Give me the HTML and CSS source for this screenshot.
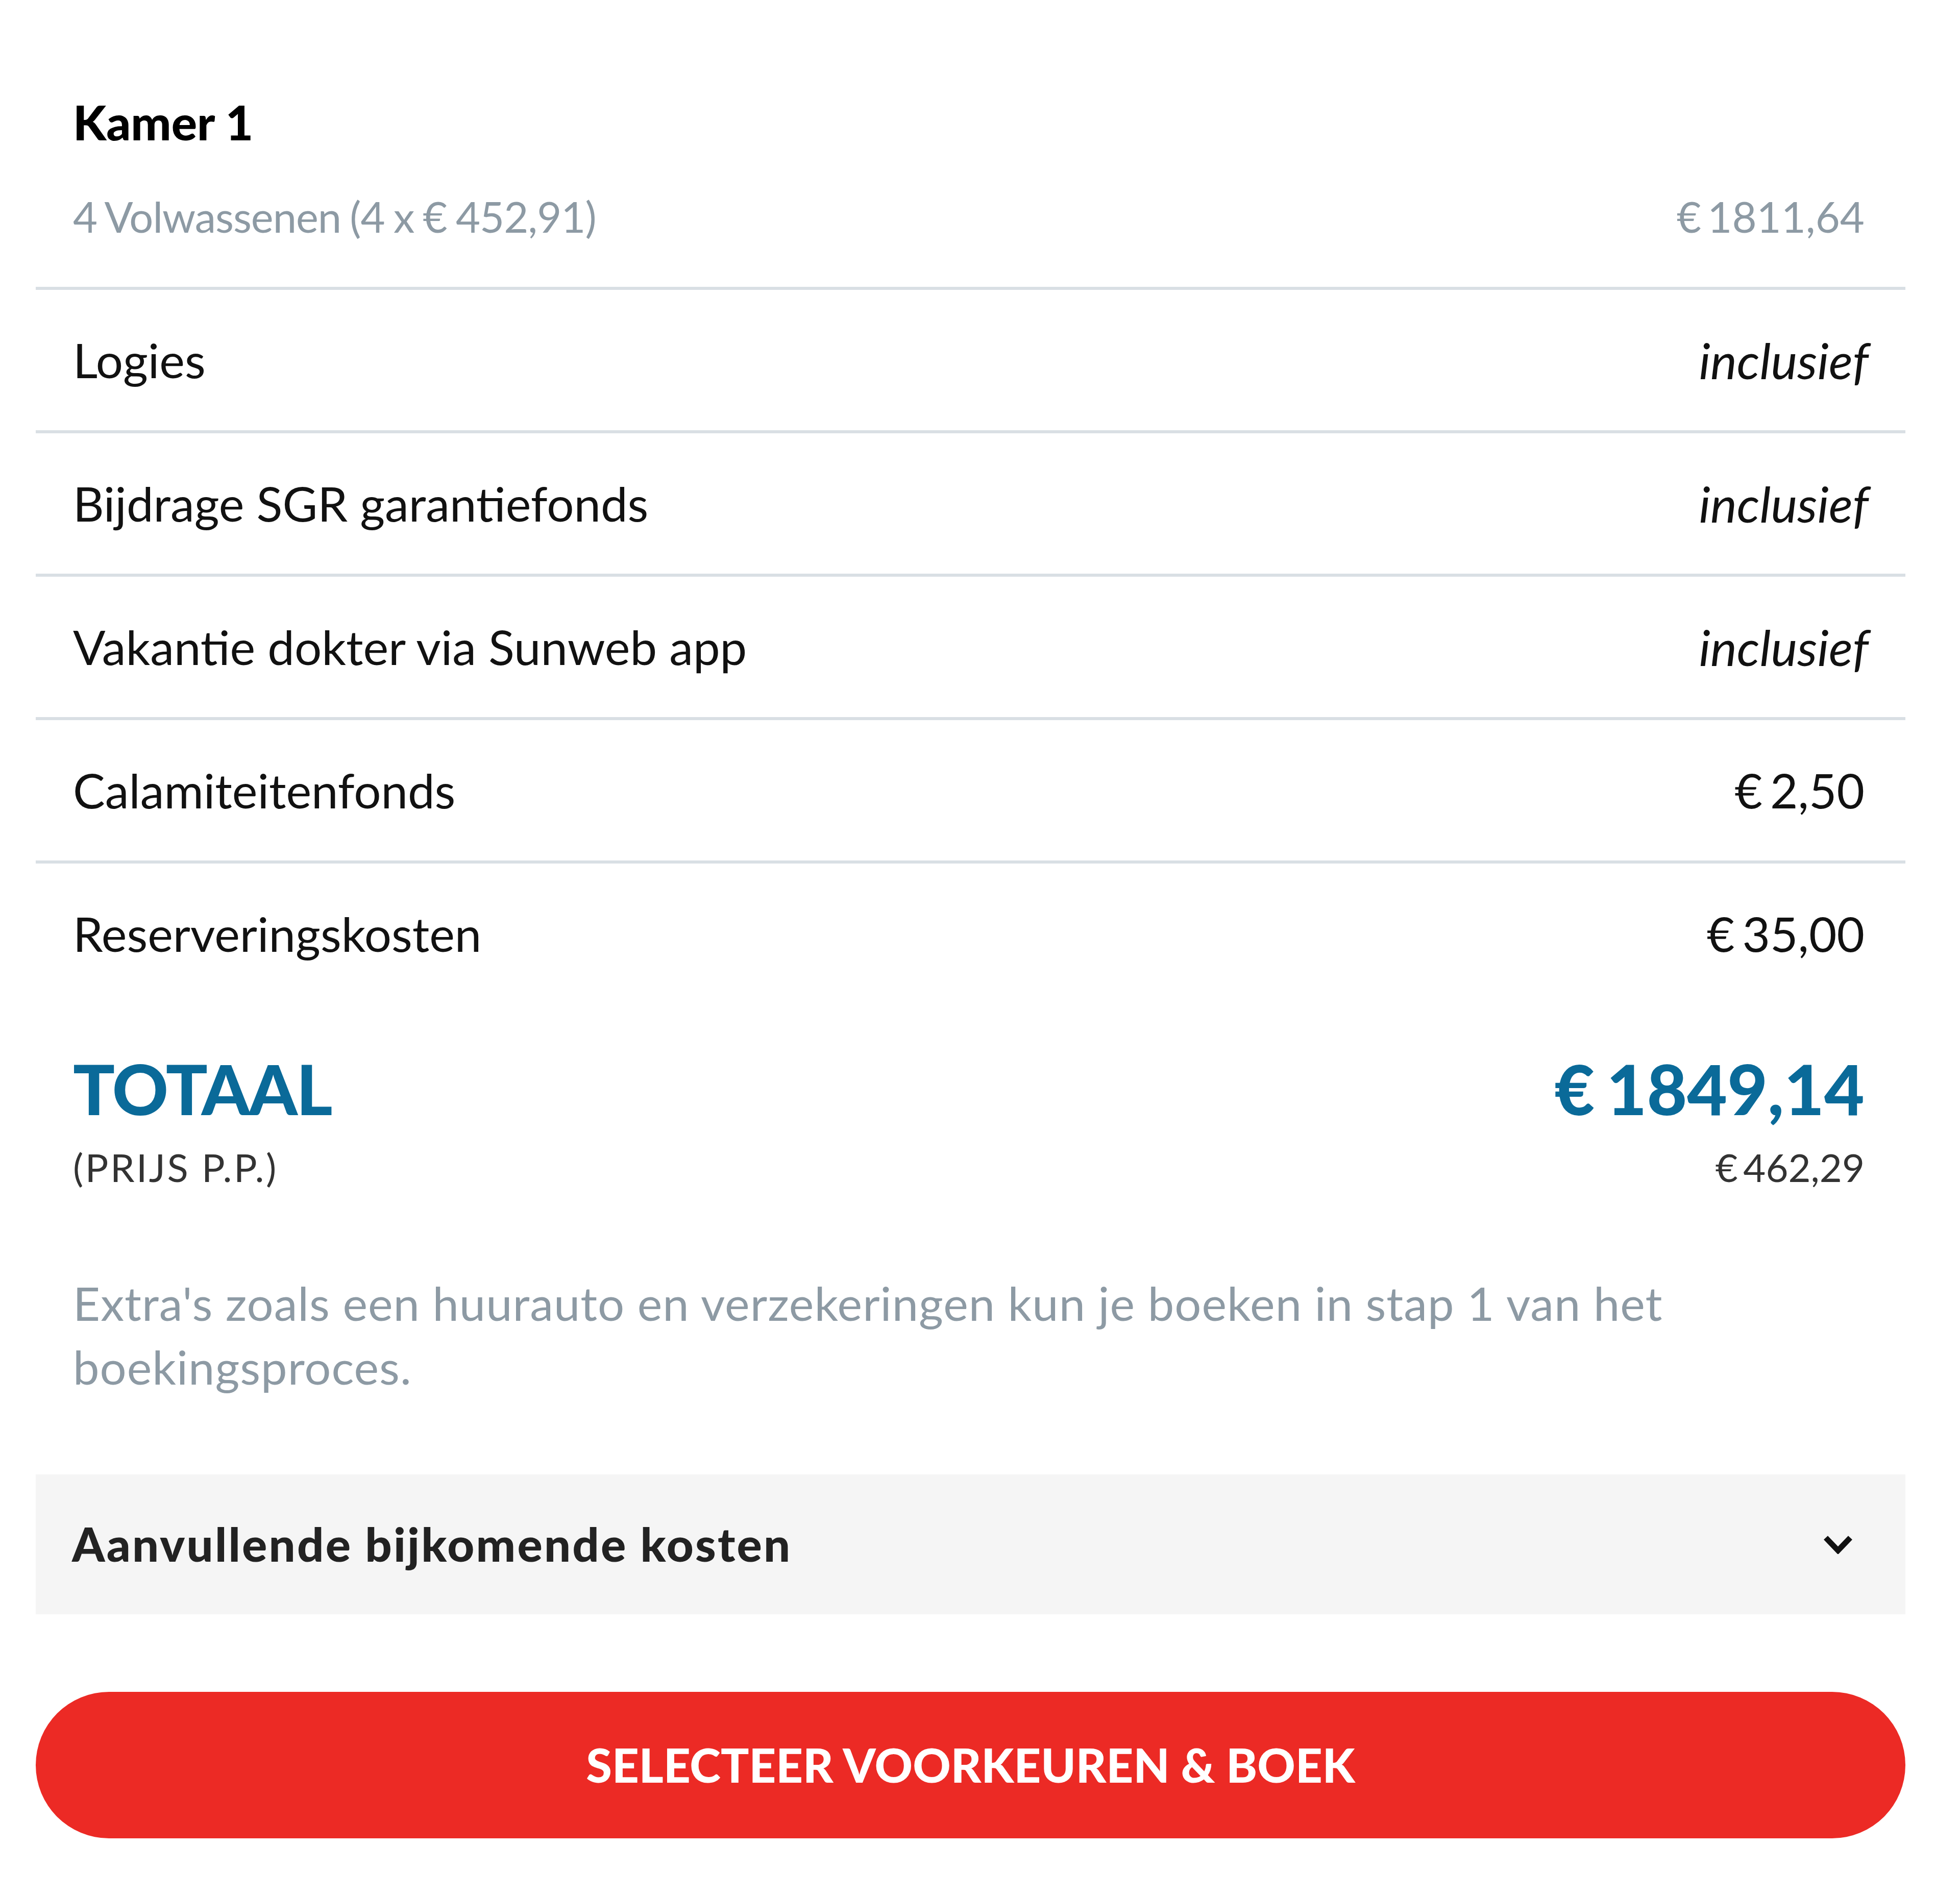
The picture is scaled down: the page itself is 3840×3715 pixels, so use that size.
FILE: index.html
```html
<!DOCTYPE html>
<html lang="nl">
<head>
<meta charset="utf-8">
<title>Prijsoverzicht</title>
<link rel="stylesheet" href="styles.css">
</head>
<body>
<main class="card">
  <section class="room">
    <h2 class="room-title">Kamer 1</h2>
    <div class="room-line">
      <span class="tight">4 Volwassenen (4 x € 452,91)</span>
      <span class="amount">€ 1811,64</span>
    </div>
  </section>

  <ul class="rows">
    <li class="row"><span>Logies</span><em class="incl">inclusief</em></li>
    <li class="row"><span>Bijdrage SGR garantiefonds</span><em class="incl">inclusief</em></li>
    <li class="row"><span>Vakantie dokter via Sunweb app</span><em class="incl">inclusief</em></li>
    <li class="row"><span>Calamiteitenfonds</span><span class="amount">€ 2,50</span></li>
    <li class="row"><span>Reserveringskosten</span><span class="amount">€ 35,00</span></li>
  </ul>

  <section class="total">
    <div class="total-col">
      <div class="total-big total-label">TOTAAL</div>
      <div class="total-small pp">(PRIJS P.P.)</div>
    </div>
    <div class="total-col total-right">
      <div class="total-big amount">€ 1849,14</div>
      <div class="total-small amount">€ 462,29</div>
    </div>
  </section>

  <p class="note">Extra's zoals een huurauto en verzekeringen kun je boeken in stap 1 van het boekingsproces.</p>

  <div class="extra-costs">
    <span class="extra-title">Aanvullende bijkomende kosten</span>
    <svg class="chevron" width="58" height="38" viewBox="0 0 58 38" aria-hidden="true">
      <polyline points="5,6 29,31 53,6" fill="none" stroke="#111" stroke-width="11" stroke-linejoin="miter"/>
    </svg>
  </div>

  <button class="cta">SELECTEER VOORKEUREN &amp; BOEK</button>
</main>
</body>
</html>
```

FILE: styles.css
```css
html, body {
  margin: 0;
  padding: 0;
  background: #ffffff;
}

body {
  font-family: "Lato", "Open Sans", "Liberation Sans", sans-serif;
  color: #111111;
  height: 3715px;
}

.card {
  width: 3663px;
  margin-left: 70px;
  padding-top: 183px;
}

.room {
  padding: 0 80px 0 73px;
}

.room-title {
  margin: 0;
  font-size: 94px;
  line-height: 1.2;
  font-weight: 900;
  color: #000;
}

.room-line {
  display: flex;
  justify-content: space-between;
  margin-top: 79px;
  padding-bottom: 88px;
  font-size: 83px;
  line-height: 1.2;
  color: #8d9aa4;
}

.tight {
  letter-spacing: -1px;
  word-spacing: -3px;
}

.amount {
  word-spacing: -9px;
}

.rows {
  list-style: none;
  margin: 0;
  padding: 0;
}

.row {
  display: flex;
  justify-content: space-between;
  align-items: center;
  height: 275px;
  border-top: 6px solid #d9dfe4;
  padding: 0 80px 0 73px;
  font-size: 94px;
  line-height: 1.2;
  color: #111;
}

.incl {
  font-style: italic;
  font-size: 98px;
  margin-right: -8px;
}

.total {
  display: flex;
  justify-content: space-between;
  padding: 98px 80px 0 73px;
}

.total-col {
  display: flex;
  flex-direction: column;
}

.total-right {
  align-items: flex-end;
}

.total-big {
  font-size: 136px;
  line-height: 1;
  font-weight: 900;
  color: #0a6a99;
}

.total-label {
  letter-spacing: -2.5px;
}

.total-small {
  margin-top: 40px;
  font-size: 76px;
  line-height: 1.2;
  color: #333333;
}

.pp {
  letter-spacing: 3.5px;
}

.note {
  margin: 157px 0 0 0;
  padding: 0 300px 0 73px;
  font-size: 92px;
  line-height: 125px;
  letter-spacing: 1px;
  color: #8d9aa4;
}

.extra-costs {
  display: flex;
  justify-content: space-between;
  align-items: center;
  height: 274px;
  margin-top: 149px;
  padding: 0 103px 0 71px;
  background: #f5f5f5;
}

.extra-title {
  font-size: 92px;
  line-height: 1.2;
  font-weight: 900;
  letter-spacing: 3.2px;
  color: #222222;
}

.chevron {
  display: block;
}

.cta {
  display: block;
  width: 100%;
  height: 287px;
  margin-top: 152px;
  border: 0;
  border-radius: 144px;
  background: #ec2a25;
  color: #ffffff;
  font-family: "Lato", "Open Sans", "Liberation Sans", sans-serif;
  font-size: 92px;
  font-weight: 900;
  line-height: 1;
  padding: 0;
  cursor: pointer;
}
```
